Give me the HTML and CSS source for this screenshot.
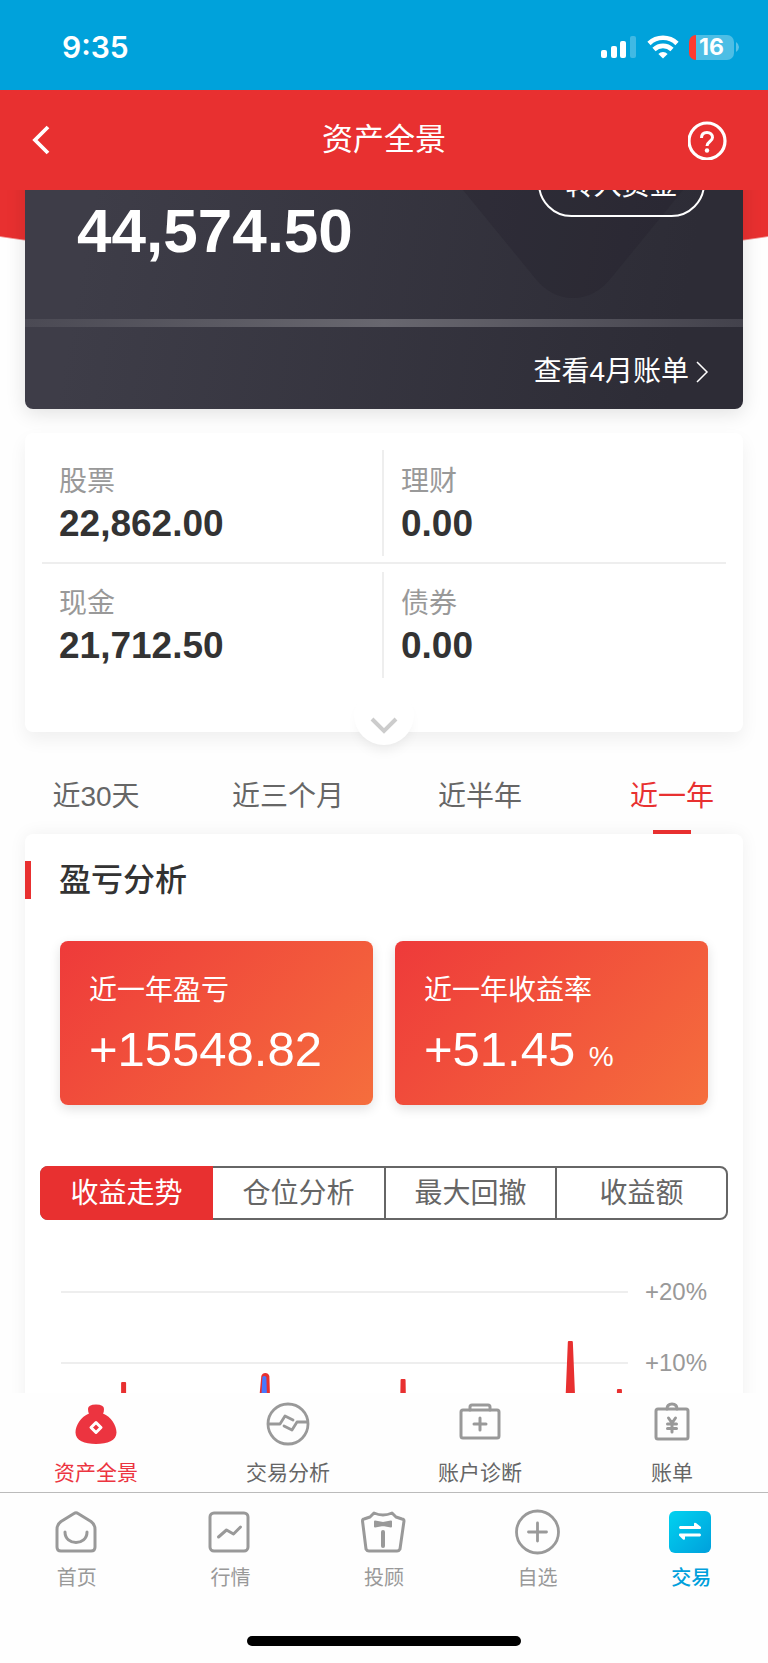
FILE: index.html
```
<!DOCTYPE html>
<html lang="zh-CN">
  <head>
    <meta charset="utf-8">
    <meta name="viewport" content="width=device-width, initial-scale=1">
    <title>资产全景</title>
    <link rel="stylesheet" href="styles.css">
  </head>
  <body>
    <div class="app">
      <div class="status">
        <span class="status-time">9:35</span>
        <div class="status-icons">
          <svg width="36" height="24" viewBox="0 0 36 24" fill="#fff">
            <rect x="0" y="15" width="6" height="8" rx="2"/>
            <rect x="10" y="11" width="6" height="12" rx="2"/>
            <rect x="19" y="6" width="6" height="17" rx="2"/>
            <rect x="29" y="1" width="6" height="22" rx="2" opacity=".25"/>
          </svg>
          <svg width="32" height="24" viewBox="0 0 32 24" fill="none" stroke="#fff" stroke-width="4.600">
            <path d="M2 8.500a20 20 0 0 1 28 0"/>
            <path d="M7 14.500a13 13 0 0 1 18 0"/>
            <path d="M16 23.500l-4.600-4.600a6.500 6.500 0 0 1 9.200 0z" fill="#fff" stroke="none"/>
          </svg>
          <div class="battery">
            <span class="battery-level">16</span>
            <svg width="4" height="10" viewBox="0 0 4 10"><path d="M1 0q3 2 3 5t-3 5z" fill="#fff" opacity=".35"/></svg>
          </div>
        </div>
      </div>

      <header class="topbar">
        <button class="icon-btn back" aria-label="返回">
          <svg width="20" height="32" viewBox="0 0 20 32" fill="none" stroke="#fff" stroke-width="3.800"><path d="M18 3L5 16l13 13"/></svg>
        </button>
        <h1>资产全景</h1>
        <button class="icon-btn" aria-label="帮助">
          <svg width="40" height="40" viewBox="0 0 40 40" fill="none" stroke="#fff" stroke-width="3.200">
            <circle cx="19" cy="21" r="18"/>
            <path d="M13.500 18c0-3.500 2.200-5.500 5.500-5.500s5.500 2 5.500 5c0 4-5.500 4-5.500 8.500" stroke-width="3"/>
            <circle cx="19" cy="30.500" r="2.200" fill="#fff" stroke="none"/>
          </svg>
        </button>
      </header>

      <main class="scroll">
        <div class="hero">
          <section class="asset">
            <div class="asset-top">
              <svg class="asset-shield" width="240" height="108" viewBox="0 0 240 108" preserveAspectRatio="none">
                <path d="M12 0l72 88q16 20 38 20t38-20L232 0z"/>
              </svg>
              <strong class="asset-total">44,574.50</strong>
              <button class="transfer">转入资金</button>
            </div>
            <div class="asset-strip"></div>
            <a class="asset-bill" href="#">查看4月账单
              <svg width="14" height="24" viewBox="0 0 14 24" fill="none" stroke="#fff" stroke-width="1.500"><path d="M2 2l10 10L2 22"/></svg>
            </a>
          </section>
        </div>

        <section class="holdings">
          <dl>
            <div><dt>股票</dt><dd>22,862.00</dd></div>
            <div><dt>理财</dt><dd>0.00</dd></div>
            <div><dt>现金</dt><dd>21,712.50</dd></div>
            <div><dt>债券</dt><dd>0.00</dd></div>
          </dl>
          <button class="expand" aria-label="展开">
            <svg width="28" height="18" viewBox="0 0 28 18" fill="none" stroke="#ccc" stroke-width="4"><path d="M2 2l12 12L26 2"/></svg>
          </button>
        </section>

        <nav class="ranges">
          <button>近30天</button>
          <button>近三个月</button>
          <button>近半年</button>
          <button class="active">近一年</button>
        </nav>

        <section class="analysis">
          <h2>盈亏分析</h2>
          <div class="results">
            <div class="result"><h3>近一年盈亏</h3><p>+15548.82</p></div>
            <div class="result"><h3>近一年收益率</h3><p>+51.45 <small>%</small></p></div>
          </div>
          <div class="segments">
            <button class="active">收益走势</button>
            <button>仓位分析</button>
            <button>最大回撤</button>
            <button>收益额</button>
          </div>
          <div class="chart">
            <svg class="chart-plot" height="160" viewBox="0 0 566 160" preserveAspectRatio="none">
              <path d="M0 12h566M0 83h566" stroke="#eee" stroke-width="2"/>
              <g fill="#e83030">
                <path d="M60 160v-57q0-1 1-1h3q1 0 1 1v57z"/>
                <path d="M194 160l6-64q1-3 4-3t4 3l2 64z"/>
                <path d="M338 160l1-60q0-1 1-1h3q1 0 1 1l1 60z"/>
                <path d="M502 160l4-98q0-1 1-1h3q1 0 1 1l4 98z"/>
                <path d="M555 160v-50q0-1 1-1h3q1 0 1 1v50z"/>
              </g>
              <path d="M198 160l3-63q2-2 4 0l2 63z" fill="#4678ff"/>
            </svg>
            <div class="chart-axis"><span>+20%</span><span>+10%</span></div>
          </div>
        </section>
      </main>

      <nav class="subnav">
        <a class="active" href="#">
          <svg width="44" height="44" viewBox="0 0 44 44">
            <path d="M14 7q0-4.500 8-4.500t8 4.500q0 3-1 4.500c8 3 13.500 12 13.500 19 0 8-9 11.500-20.500 11.500S1.500 38.500 1.500 30.500c0-7 5.500-16 13.500-19q-1-1.500-1-4.500z" fill="#ec3440"/>
            <path d="M22 20.500l5 5-5 5-5-5z" fill="none" stroke="#fff" stroke-width="3" stroke-linejoin="round"/>
          </svg>
          资产全景
        </a>
        <a href="#">
          <svg width="44" height="44" viewBox="0 0 44 44" fill="none" stroke="#999" stroke-width="2.800" stroke-linecap="round" stroke-linejoin="round">
            <circle cx="22" cy="22" r="20"/>
            <path d="M3 22h11l5-8 8 4M41 20H31l-5 8-8-4"/>
          </svg>
          交易分析
        </a>
        <a href="#">
          <svg width="44" height="44" viewBox="0 0 44 44" fill="none" stroke="#999" stroke-width="3" stroke-linecap="round" stroke-linejoin="round">
            <rect x="3" y="8" width="38" height="28" rx="2"/>
            <path d="M12 8V5q0-2 2-2h16q2 0 2 2v3M22 16v12M16 22h12"/>
          </svg>
          账户诊断
        </a>
        <a href="#">
          <svg width="44" height="44" viewBox="0 0 44 44" fill="none" stroke="#999" stroke-width="3" stroke-linecap="round" stroke-linejoin="round">
            <rect x="6" y="7" width="32" height="30" rx="2"/>
            <path d="M17 7q0-5 5-5t5 5M18.500 16l3.500 5 3.500-5M17.500 22h9M17.500 26.500h9M22 21v9"/>
          </svg>
          账单
        </a>
      </nav>

      <nav class="tabbar">
        <a href="#">
          <svg width="46" height="46" viewBox="0 0 46 46" fill="none" stroke="#999" stroke-width="3" stroke-linecap="round" stroke-linejoin="round">
            <path d="M20 4.500q2-1.500 4 0l13 8q4 3 4 8v17.500q0 4-4 4H7q-4 0-4-4V20.500q0-5 4-8z"/>
            <path d="M11 23c0 14 22 14 22 0"/>
          </svg>
          首页
        </a>
        <a href="#">
          <svg width="46" height="46" viewBox="0 0 46 46" fill="none" stroke="#999" stroke-width="3" stroke-linecap="round" stroke-linejoin="round">
            <rect x="3" y="4" width="38" height="38" rx="4"/>
            <path d="M11.500 28l8-7 7 4 7-7"/>
          </svg>
          行情
        </a>
        <a href="#">
          <svg width="46" height="46" viewBox="0 0 46 46" fill="none" stroke="#999" stroke-width="3" stroke-linecap="round" stroke-linejoin="round">
            <path d="M13 4q9 4 18 0l4 4 6 2q2 0 2 2l-4 28q-1 2-3 2H8q-2 0-3-2L1.500 12q0-2 1.500-2l6-2z"/>
            <path d="M14 12.500l8 1.500 8-1.500v5L22 16l-8 1.500z" fill="#999" stroke-width="2"/>
            <path d="M22 23v14" stroke-width="4"/>
          </svg>
          投顾
        </a>
        <a href="#">
          <svg width="46" height="46" viewBox="0 0 46 46" fill="none" stroke="#999" stroke-width="2.800" stroke-linecap="round">
            <circle cx="22.500" cy="23" r="21"/>
            <path d="M22.500 14v18M13.500 23h18"/>
          </svg>
          自选
        </a>
        <a class="active" href="#">
          <svg width="46" height="46" viewBox="0 0 46 46">
            <defs>
              <linearGradient id="trade" x1="0" y1="0" x2="1" y2="1"><stop offset="0" stop-color="#00d2f0"/><stop offset="1" stop-color="#00a0dc"/></linearGradient>
            </defs>
            <rect x="1" y="2" width="42" height="42" rx="6" fill="url(#trade)"/>
            <path d="M12 17h14v-2q0-2 2-1l5 4v1q0 1-1 1H12q-2-1.500 0-3zM32 24.500H12q-1 0-1 1v1l4 4q2 1 2-1v-2h15q2-1.500 0-3z" fill="#fff"/>
          </svg>
          交易
        </a>
      </nav>
      <div class="home"></div>
    </div>
  </body>
</html>
```
FILE: styles.css
```
*
{
  box-sizing: border-box;
}

body, h1, h2, h3, p, dl, dd
{
  margin: 0;
}

body
{
  font-family: "Liberation Sans", "Noto Sans CJK SC", sans-serif;
  font-size: 28px;
  line-height: 40px;
  color: #333;
  background-color: #FEFEFE;
}

button
{
  padding: 0;
  border: 0;
  background: none;
  font: inherit;
  color: inherit;
}

a
{
  color: inherit;
  text-decoration: none;
}

svg
{
  display: block;
  flex: none;
}

.app
{
  display: flex;
  flex-direction: column;
  height: 100vh;
}

/* status bar */

.status
{
  display: flex;
  justify-content: space-between;
  align-items: center;
  height: 90px;
  padding: 4px 29px 0 62px;
  color: #FFF;
  background-color: #00A2DB;
}

.status-time
{
  font: 600 30px "Inter", sans-serif;
}

.status-icons
{
  display: flex;
  align-items: center;
  gap: 10px;
}

.battery
{
  display: flex;
  align-items: center;
  gap: 1px;
}

.battery-level
{
  width: 45px;
  border-radius: 7px;
  font: 700 23px/25px "Inter", sans-serif;
  text-align: center;
  background: linear-gradient(90deg, #FF3B30 7px, #4DBEE5 7px);
}

/* title bar */

.topbar
{
  display: flex;
  justify-content: space-between;
  align-items: center;
  height: 100px;
  padding: 0 40px 0 30px;
  color: #FFF;
  background-color: #E83030;
}

.topbar h1
{
  flex: 1;
  font-size: 31px;
  font-weight: 400;
  text-align: center;
}

.icon-btn
{
  display: flex;
  width: 40px;
}

.back
{
  width: 50px;
}

/* scrolled content */

.scroll
{
  flex: 1;
  min-height: 0;
  overflow: hidden;
}

.hero
{
  padding: 0 25px;
  background: radial-gradient(ellipse 960px 330px at 50% -215px, #E83030 99.5%, transparent 100%) no-repeat;
}

.asset
{
  margin-top: -40px;
  border-radius: 8px;
  color: #FFF;
  background: linear-gradient(100deg, #3E3D48 10%, #2D2C36 90%);
  box-shadow: 0 4px 20px rgba(0, 0, 0, .12);
}

.asset-top
{
  position: relative;
  display: flex;
  justify-content: space-between;
  align-items: flex-end;
  height: 169px;
  padding: 0 38px 50px 52px;
}

.asset-shield
{
  position: absolute;
  top: 40px;
  right: 52px;
  fill: rgba(30, 29, 38, .25);
}

.asset-total
{
  position: relative;
  font-size: 62px;
  line-height: 76px;
}

.transfer
{
  position: relative;
  align-self: flex-start;
  width: 167px;
  height: 67px;
  padding-top: 4px;
  border: 2px solid #FFF;
  border-radius: 34px;
}

.asset-strip
{
  height: 8px;
  background: linear-gradient(90deg, #4B4A54, #68676F 50%, #43424C);
}

.asset-bill
{
  display: flex;
  justify-content: flex-end;
  align-items: center;
  gap: 6px;
  height: 82px;
  padding: 8px 34px 0 0;
}

.holdings
{
  position: relative;
  margin: 24px 25px 0;
  padding: 9px 17px 46px;
  border-radius: 8px;
  background-color: #FFF;
  box-shadow: 0 8px 18px rgba(0, 0, 0, .06);
}

.holdings dl
{
  display: grid;
  grid-template-columns: 1fr 1fr;
}

.holdings dl div
{
  position: relative;
  height: 122px;
  padding: 20px 17px 0;
}

.holdings dl div:nth-child(-n+2)
{
  border-bottom: 2px solid #EEE;
}

.holdings dl div:nth-child(odd)::after
{
  content: "";
  position: absolute;
  top: 8px;
  right: 0;
  width: 2px;
  height: 106px;
  background-color: #EEE;
}

dt
{
  color: #999;
}

dd
{
  font-size: 37px;
  font-weight: 700;
  line-height: 44px;
}

.expand
{
  position: absolute;
  bottom: -13px;
  left: 50%;
  display: flex;
  justify-content: center;
  align-items: flex-end;
  width: 60px;
  height: 60px;
  margin-left: -30px;
  padding-bottom: 10px;
  border-radius: 50%;
  background-color: #FFF;
  box-shadow: 0 10px 14px -6px rgba(0, 0, 0, .08);
}

.ranges
{
  display: grid;
  grid-template-columns: repeat(4, 1fr);
  height: 102px;
  color: #666;
}

.ranges button
{
  position: relative;
  padding-top: 28px;
}

.ranges .active
{
  color: #E83030;
}

.ranges .active::after
{
  content: "";
  position: absolute;
  bottom: 0;
  left: 50%;
  width: 38px;
  height: 4px;
  margin-left: -19px;
  background-color: #E83030;
}

.analysis
{
  margin: 0 25px;
  padding: 27px 15px 0;
  border-radius: 8px;
  background-color: #FFF;
  box-shadow: 0 0 18px rgba(0, 0, 0, .06);
}

.analysis h2
{
  margin-left: -15px;
  padding-left: 28px;
  border-left: 6px solid #E83030;
  font-size: 32px;
  font-weight: 500;
  line-height: 38px;
}

.results
{
  display: grid;
  grid-template-columns: 1fr 1fr;
  gap: 22px;
  margin: 42px 20px 61px 20px;
}

.result
{
  height: 164px;
  padding: 30px 29px 0;
  border-radius: 8px;
  color: #FFF;
  background: linear-gradient(135deg, #EE3A3A, #F56E3D);
  box-shadow: 0 4px 12px rgba(0, 0, 0, .12);
}

.result h3
{
  font-size: 28px;
  font-weight: 400;
}

.result p
{
  font-size: 49px;
  line-height: 76px;
}

.result small
{
  font-size: 28px;
}

.segments
{
  display: grid;
  grid-template-columns: repeat(4, 1fr);
  height: 54px;
  border: 2px solid #666;
  border-radius: 8px;
  color: #666;
}

.segments button
{
  padding-top: 2px;
}

.segments button + button
{
  border-left: 2px solid #666;
}

.segments .active
{
  margin: -2px 0 -2px -2px;
  border-radius: 8px 0 0 8px;
  color: #FFF;
  background-color: #E83030;
}

.segments .active + button
{
  border-left: 0;
}

.chart
{
  display: flex;
  gap: 17px;
  margin: 60px 21px 0 21px;
  font-size: 24px;
  color: #999;
}

.chart-plot
{
  flex: 1;
  min-width: 0;
}

.chart-axis
{
  display: flex;
  flex-direction: column;
  gap: 47px;
  line-height: 24px;
}

/* bottom navigation */

.subnav, .tabbar
{
  display: grid;
  grid-auto-flow: column;
  grid-auto-columns: 1fr;
}

.subnav a, .tabbar a
{
  display: flex;
  flex-direction: column;
  align-items: center;
}

.subnav
{
  height: 100px;
  padding-top: 9px;
  border-bottom: 1px solid #BBB;
  font-size: 21px;
  line-height: 38px;
  color: #666;
}

.subnav a
{
  gap: 8px;
}

.subnav .active
{
  color: #EC3440;
}

.tabbar
{
  height: 143px;
  padding-top: 16px;
  font-size: 20px;
  line-height: 46px;
  color: #999;
}

.tabbar .active
{
  font-weight: 500;
  color: #00A0DC;
}

.home
{
  width: 274px;
  height: 10px;
  margin: 0 auto 17px;
  border-radius: 5px;
  background-color: #000;
}
```
